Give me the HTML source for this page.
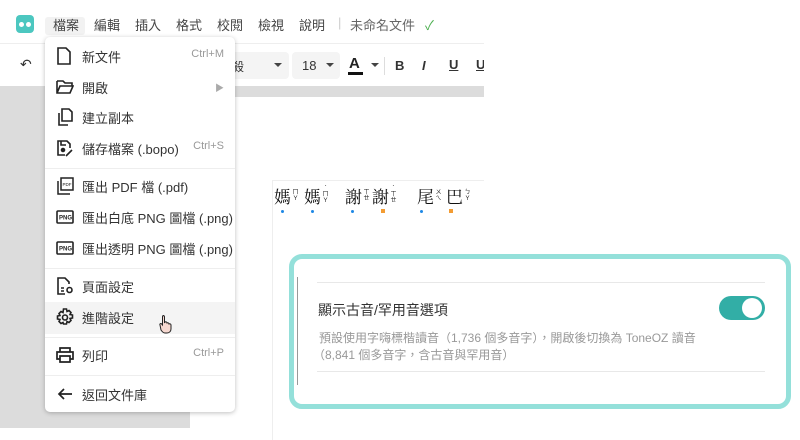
<!DOCTYPE html>
<html><head><meta charset="utf-8"><style>
*{margin:0;padding:0;box-sizing:border-box}
body{width:800px;height:440px;overflow:hidden;background:#fff;font-family:"Liberation Sans","Noto Sans CJK TC",sans-serif;position:relative;color:#333}
.abs{position:absolute}
.menubar span{position:absolute;top:15px;font-size:13px;color:#444}
.grey{background:#dcdcdc}
.menu{left:45px;top:37px;width:190px;height:375px;background:#fff;border-radius:5px;box-shadow:0 1px 5px rgba(0,0,0,.25)}
.it{position:absolute;left:0;width:190px;height:31px;font-size:13px;color:#333}
.it .t{position:absolute;left:37px;top:5px}
.it .k{position:absolute;right:11px;top:6px;font-size:11px;color:#999}
.it svg{position:absolute;left:11px;top:5px}
.div{position:absolute;left:0;width:190px;height:1px;background:#eee}
.ch{position:absolute;top:186px;font-size:17px;line-height:20px;color:#111;font-family:'Noto Serif CJK SC',serif}
.bp{position:absolute;top:190px;font-size:6px;line-height:6px;width:7px;text-align:center;color:#222}
</style></head><body>
<!-- top bar -->
<div class="abs" style="left:16px;top:15px;width:18px;height:18px;border-radius:4px;background:#4cc7c0"></div>
<div class="abs" style="left:19px;top:22px;width:5px;height:5px;border-radius:50%;background:#fff"></div>
<div class="abs" style="left:26px;top:22px;width:5px;height:5px;border-radius:50%;background:#fff"></div>
<div class="abs" style="left:45px;top:17px;width:40px;height:18px;background:#f2f2f2;border-radius:3px"></div>
<div class="menubar">
<span style="left:53px">檔案</span><span style="left:94px">編輯</span><span style="left:135px">插入</span><span style="left:176px">格式</span><span style="left:217px">校閱</span><span style="left:258px">檢視</span><span style="left:299px">說明</span>
<span style="left:338px;color:#ccc">|</span><span style="left:350px;color:#666">未命名文件</span><span style="left:425px;color:#4caf50">✓</span>
</div>
<div class="abs" style="left:0;top:43px;width:484px;height:1px;background:#eee"></div>
<!-- toolbar -->
<div class="abs" style="left:20px;top:56px;font-size:14px;color:#333">↶</div>
<div class="abs" style="left:230px;top:52px;width:59px;height:27px;background:#f4f4f4;border-radius:4px"></div>
<div class="abs" style="left:232px;top:58px;font-size:12px;color:#333">殺</div>
<div class="abs" style="left:274px;top:63px;border:4px solid transparent;border-top:4px solid #444"></div>
<div class="abs" style="left:292px;top:52px;width:48px;height:27px;background:#f4f4f4;border-radius:4px"></div>
<div class="abs" style="left:302px;top:58px;font-size:13px;color:#333">18</div>
<div class="abs" style="left:326px;top:63px;border:4px solid transparent;border-top:4px solid #444"></div>
<div class="abs" style="left:349px;top:55px;font-size:15px;font-weight:bold;color:#222">A</div>
<div class="abs" style="left:348px;top:72px;width:15px;height:3px;background:#111"></div>
<div class="abs" style="left:371px;top:63px;border:4px solid transparent;border-top:4px solid #444"></div>
<div class="abs" style="left:384px;top:57px;width:1px;height:18px;background:#ddd"></div>
<div class="abs" style="left:395px;top:58px;font-size:13px;font-weight:bold">B</div>
<div class="abs" style="left:422px;top:58px;font-size:13px;font-style:italic;font-weight:bold">I</div>
<div class="abs" style="left:449px;top:57px;font-size:13px;font-weight:bold;text-decoration:underline">U</div>
<div class="abs" style="left:476px;top:57px;font-size:13px;font-weight:bold;text-decoration:underline;width:8px;overflow:hidden">U</div>
<!-- grey area -->
<div class="abs grey" style="left:0;top:86px;width:484px;height:11px"></div>
<div class="abs grey" style="left:0;top:86px;width:190px;height:342px"></div>
<!-- page -->
<div class="abs" style="left:272px;top:180px;width:212px;height:1px;background:#eee"></div>
<div class="abs" style="left:272px;top:180px;width:1px;height:260px;background:#eee"></div>
<div class="ch" style="left:274px">媽</div><div class="bp" style="left:292px">ㄇ<br>Y</div>
<div class="ch" style="left:304px">媽</div><div class="bp" style="left:322px;top:186px">ˊ<br>ㄇ<br>Y</div>
<div class="ch" style="left:345px">謝</div><div class="bp" style="left:363px">ㄒ<br>ㄝ</div>
<div class="ch" style="left:372px">謝</div><div class="bp" style="left:390px;top:186px">ˋ<br>ㄒ<br>ㄝ</div>
<div class="ch" style="left:417px">尾</div><div class="bp" style="left:435px">ㄨ<br>ㄟ</div>
<div class="ch" style="left:446px">巴</div><div class="bp" style="left:464px">ㄅ<br>Y</div>
<div class="abs" style="left:281px;top:210px;width:3px;height:3px;border-radius:50%;background:#1e88e5"></div>
<div class="abs" style="left:311px;top:210px;width:3px;height:3px;border-radius:50%;background:#1e88e5"></div>
<div class="abs" style="left:351px;top:210px;width:3px;height:3px;border-radius:50%;background:#1e88e5"></div>
<div class="abs" style="left:381px;top:209px;width:4px;height:4px;background:#f39c33"></div>
<div class="abs" style="left:420px;top:210px;width:3px;height:3px;border-radius:50%;background:#1e88e5"></div>
<div class="abs" style="left:449px;top:209px;width:4px;height:4px;background:#f39c33"></div>
<!-- card -->
<div class="abs" style="left:289px;top:254px;width:502px;height:155px;border:5px solid #94e0da;border-radius:13px;background:#fff"></div>
<div class="abs" style="left:297px;top:277px;width:1px;height:108px;background:#999"></div>
<div class="abs" style="left:317px;top:282px;width:448px;height:1px;background:#e8e8e8"></div>
<div class="abs" style="left:317px;top:371px;width:448px;height:1px;background:#e8e8e8"></div>
<div class="abs" style="left:318px;top:300px;font-size:14px;color:#333">顯示古音/罕用音選項</div>
<div class="abs" style="left:319px;top:330px;font-size:12px;color:#999;line-height:17px;width:420px">預設使用字嗨標楷讀音（1,736 個多音字），開啟後切換為 ToneOZ 讀音<br><span style="margin-left:-6px">（8,841 個多音字，含古音與罕用音）</span></div>
<div class="abs" style="left:719px;top:296px;width:46px;height:24px;border-radius:12px;background:#32aea6"></div>
<div class="abs" style="left:742px;top:298px;width:20px;height:20px;border-radius:50%;background:#fff"></div>
<!-- menu -->
<div class="abs menu">
<div class="it" style="top:5px"><svg width="16" height="18" viewBox="0 0 16 18" fill="none" stroke="#222" stroke-width="1.6"><path d="M2 1h8l4 4v12H2z"/></svg><span class="t">新文件</span><span class="k">Ctrl+M</span></div>
<div class="it" style="top:36px"><svg width="18" height="18" viewBox="0 0 18 18" fill="none" stroke="#222" stroke-width="1.6"><path d="M1 3h6l2 2h7v3M1 3v12h13l3-7H4L1 15"/></svg><span class="t">開啟</span><span class="k" style="font-size:9px;top:8px;color:#aaa">▶</span></div>
<div class="it" style="top:66px"><svg width="18" height="18" viewBox="0 0 18 18" fill="none" stroke="#222" stroke-width="1.6"><path d="M6 1h7l3 3v9H6zM3 5v12h9"/></svg><span class="t">建立副本</span></div>
<div class="it" style="top:97px"><svg width="18" height="18" viewBox="0 0 18 18" fill="none" stroke="#222" stroke-width="1.6"><path d="M9 16H2V2h9l3 3v4M5 2v4h5M10 17l6-6"/><circle cx="7" cy="11" r="1.5" fill="#222"/></svg><span class="t">儲存檔案 (.bopo)</span><span class="k">Ctrl+S</span></div>
<div class="div" style="top:131px"></div>
<div class="it" style="top:135px"><svg width="18" height="18" viewBox="0 0 18 18" fill="none" stroke="#222" stroke-width="1.5"><path d="M5 1h12v12H5zM2 4v13h12"/><text x="6.5" y="9" font-size="4.5" fill="#222" stroke="none" font-family="Liberation Sans">PDF</text></svg><span class="t">匯出 PDF 檔 (.pdf)</span></div>
<div class="it" style="top:166px"><svg width="18" height="18" viewBox="0 0 18 18" fill="none" stroke="#222" stroke-width="1.6"><rect x="1" y="3" width="16" height="12" rx="1"/><text x="3" y="11.5" font-size="6" font-weight="bold" fill="#222" stroke="none" font-family="Liberation Sans">PNG</text></svg><span class="t">匯出白底 PNG 圖檔 (.png)</span></div>
<div class="it" style="top:197px"><svg width="18" height="18" viewBox="0 0 18 18" fill="none" stroke="#222" stroke-width="1.6"><rect x="1" y="3" width="16" height="12" rx="1"/><text x="3" y="11.5" font-size="6" font-weight="bold" fill="#222" stroke="none" font-family="Liberation Sans">PNG</text></svg><span class="t">匯出透明 PNG 圖檔 (.png)</span></div>
<div class="div" style="top:231px"></div>
<div class="it" style="top:235px"><svg width="18" height="18" viewBox="0 0 18 18" fill="none" stroke="#222" stroke-width="1.6"><path d="M9 17H2V1h7l4 4v2M5 11h3M5 14h3"/><circle cx="13.5" cy="13" r="2.5"/></svg><span class="t">頁面設定</span></div>
<div class="abs" style="left:0;top:265px;width:190px;height:32px;background:#f4f4f4"></div>
<div class="it" style="top:266px"><svg width="18" height="18" viewBox="0 0 18 18" fill="none" stroke="#222" stroke-width="1.6"><path d="M7.5 1h3l.5 2.5 2-1 2 2-1 2 2.5.5v3l-2.5.5 1 2-2 2-2-1-.5 2.5h-3L7 14.5l-2 1-2-2 1-2L1.5 11V8L4 7.5l-1-2 2-2 2 1z"/><circle cx="9" cy="9.5" r="2.5"/></svg><span class="t">進階設定</span>
<svg style="left:114px;top:11px" width="14" height="20" viewBox="0 0 14 20"><path d="M4 1.5c1 0 1.5.5 1.5 1.5v6l.5-1c1-.5 2 0 2 1 1-.5 2 0 2 1 1-.5 2 0 2 1v4c0 2.5-2 4-4 4H6c-2 0-3-1.5-4-3L1 11c-.5-1 .5-2 1.5-1.2l1 1.2V3c0-1 .5-1.5 1-1.5z" fill="#f6d8d0" stroke="#222" stroke-width="1"/></svg></div>
<div class="div" style="top:300px"></div>
<div class="it" style="top:304px"><svg width="18" height="18" viewBox="0 0 18 18" fill="none" stroke="#222" stroke-width="1.7"><path d="M4 6V2h10v4M4 13H1V6h16v7h-3M4 10h10v6H4z"/></svg><span class="t">列印</span><span class="k">Ctrl+P</span></div>
<div class="div" style="top:338px"></div>
<div class="it" style="top:343px"><svg width="18" height="18" viewBox="0 0 18 18" fill="none" stroke="#222" stroke-width="1.7"><path d="M16 9H3M8 4L3 9l5 5"/></svg><span class="t">返回文件庫</span></div>
</div>
</body></html>
